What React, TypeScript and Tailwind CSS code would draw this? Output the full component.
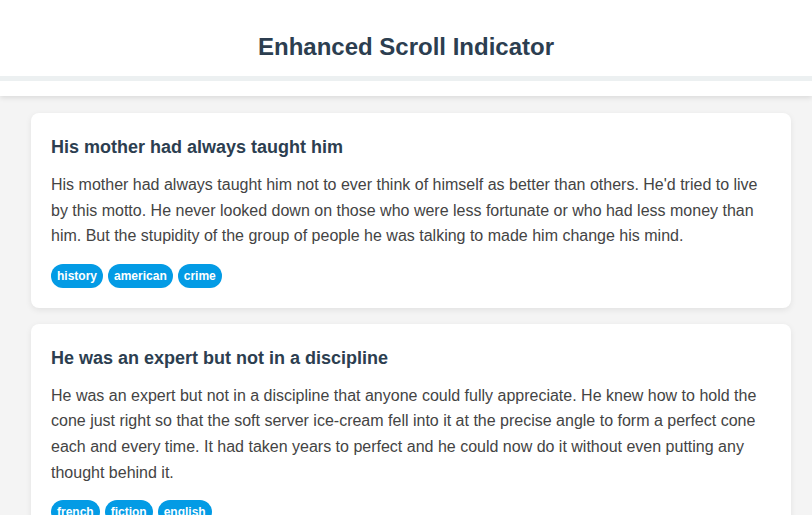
const posts = [
  {
    title: "His mother had always taught him",
    body: "His mother had always taught him not to ever think of himself as better than others. He'd tried to live by this motto. He never looked down on those who were less fortunate or who had less money than him. But the stupidity of the group of people he was talking to made him change his mind.",
    tags: ["history", "american", "crime"],
  },
  {
    title: "He was an expert but not in a discipline",
    body: "He was an expert but not in a discipline that anyone could fully appreciate. He knew how to hold the cone just right so that the soft server ice-cream fell into it at the precise angle to form a perfect cone each and every time. It had taken years to perfect and he could now do it without even putting any thought behind it.",
    tags: ["french", "fiction", "english"],
  },
  {
    title: "Dave watched as the forest burned up on the hill",
    body: "Dave watched as the forest burned up on the hill, only a few miles from her house. The car had been hastily packed and Marta was inside trying to round up the last of the pets.",
    tags: ["magical", "history", "french"],
  },
];

export default function App() {
  return (
    <div className="min-h-screen bg-[#f4f4f4] font-['Liberation_Sans',Arial,sans-serif]">
      <header className="bg-white pb-[15px] shadow-[0_2px_5px_rgba(0,0,0,0.1)]">
        <h1 className="h-[76px] pt-[18px] flex items-center justify-center text-[24px] font-bold text-[#2c3e50]">
          Enhanced Scroll Indicator
        </h1>
        <div className="h-[5px] bg-[#ecf0f1]">
          <div className="h-full w-0 bg-[#039be5]" />
        </div>
      </header>

      <main className="pl-[31px] pr-[21px] pt-[17px] flex flex-col gap-4">
        {posts.map((post) => (
          <article
            key={post.title}
            className="bg-white rounded-lg p-5 shadow-[0_2px_6px_rgba(0,0,0,0.08)]"
          >
            <h2 className="pt-px text-[18px] leading-[27px] font-bold text-[#2c3e50]">
              {post.title}
            </h2>
            <p className="mt-[11px] text-[16px] leading-[25.6px] text-[#444]">
              {post.body}
            </p>
            <div className="mt-[15px] flex gap-[5px]">
              {post.tags.map((tag) => (
                <span
                  key={tag}
                  className="h-6 px-1.5 rounded-full bg-[#039be5] text-white text-[12px] font-bold flex items-center"
                >
                  {tag}
                </span>
              ))}
            </div>
          </article>
        ))}
      </main>
    </div>
  );
}
